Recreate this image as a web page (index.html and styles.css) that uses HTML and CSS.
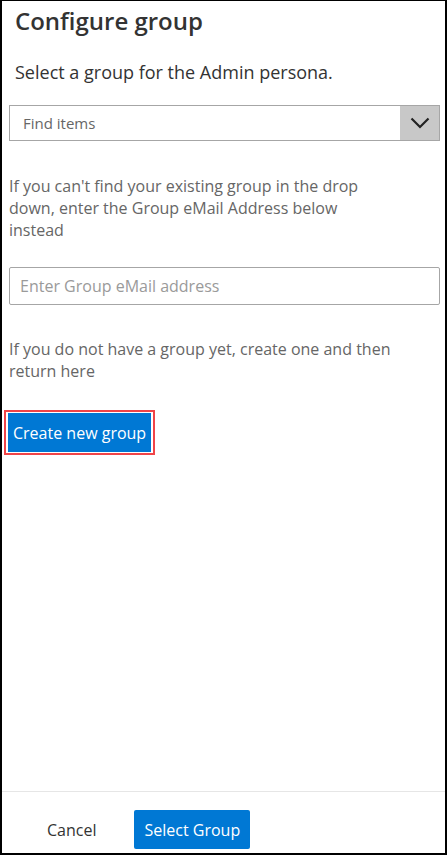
FILE: index.html
```html
<!DOCTYPE html>
<html lang="en">
<head>
<meta charset="utf-8">
<title>Configure group</title>
<link rel="stylesheet" href="styles.css">
</head>
<body>
<div class="frame">
  <main class="content">
    <h1 class="title">Configure group</h1>
    <p class="subtitle">Select a group for the Admin persona.</p>
    <div class="combo">
      <span class="combo-placeholder">Find items</span>
      <span class="combo-chevron">
        <svg width="20" height="12" viewBox="0 0 20 12" aria-hidden="true"><path d="M1.5 1.5 L10 10 L18.5 1.5" fill="none" stroke="#222" stroke-width="2.2"/></svg>
      </span>
    </div>
    <p class="help help-first">If you can't find your existing group in the drop down, enter the Group eMail Address below instead</p>
    <div class="textfield"><span class="textfield-placeholder">Enter Group eMail address</span></div>
    <p class="help help-second">If you do not have a group yet, create one and then return here</p>
    <div class="highlight">
      <button class="btn-primary create">Create new group</button>
    </div>
  </main>
  <footer class="footer">
    <button class="btn-default">Cancel</button>
    <button class="btn-primary select">Select Group</button>
  </footer>
</div>
</body>
</html>
```

FILE: styles.css
```css
* { box-sizing: border-box; }
html, body { margin: 0; padding: 0; background: #fff; }
body { font-family: "Open Sans", "Noto Sans", sans-serif; color: #333; }

.frame {
  width: 447px;
  height: 855px;
  border: 2px solid #000;
  border-top-width: 1px;
  display: flex;
  flex-direction: column;
}

.content {
  flex: 1;
  padding: 0 5px 0 7px;
  display: flex;
  flex-direction: column;
}

.title {
  margin: 3px 0 0 6px;
  font-size: 24px;
  font-weight: 600;
  line-height: 34px;
  color: #333;
}

.subtitle {
  margin: 22px 0 0 6px;
  font-size: 18px;
  line-height: 24px;
  color: #333;
}

.combo {
  margin-top: 21px;
  height: 36px;
  border: 1px solid #a6a6a6;
  display: flex;
  align-items: stretch;
}
.combo-placeholder {
  flex: 1;
  padding-left: 13px;
  font-size: 15px;
  line-height: 34px;
  color: #666;
}
.combo-chevron {
  width: 39px;
  background: #c8c8c8;
  display: flex;
  align-items: center;
  justify-content: center;
}

.help {
  margin: 0;
  width: 386px;
  font-size: 16px;
  line-height: 22px;
  color: #666;
}
.help-first { margin-top: 34px; }
.help-second { margin-top: 33px; }

.textfield {
  margin-top: 26px;
  height: 38px;
  border: 1px solid #a6a6a6;
  border-radius: 2px;
  padding-left: 10px;
  display: flex;
  align-items: center;
}
.textfield-placeholder {
  font-size: 16px;
  color: #9a9a9a;
}

.highlight {
  margin: 28px 0 0 -5px;
  align-self: flex-start;
  border: 2px solid #f04448;
  padding: 1px 2px;
  display: flex;
}

.btn-primary {
  font-family: inherit;
  border: none;
  background: #0078d4;
  color: #fff;
  font-size: 16px;
  cursor: pointer;
}
.create {
  height: 39px;
  padding: 0 5px;
}

.footer {
  height: 62px;
  border-top: 1px solid #e6e6e6;
  display: flex;
  align-items: flex-end;
  padding: 0 0 4px 28px;
  gap: 21px;
}
.btn-default {
  font-family: inherit;
  border: none;
  background: transparent;
  color: #333;
  font-size: 16px;
  height: 39px;
  padding: 0 17px 0 17px;
}
.select {
  height: 39px;
  border-radius: 2px;
  padding: 0 10px;
}
```
